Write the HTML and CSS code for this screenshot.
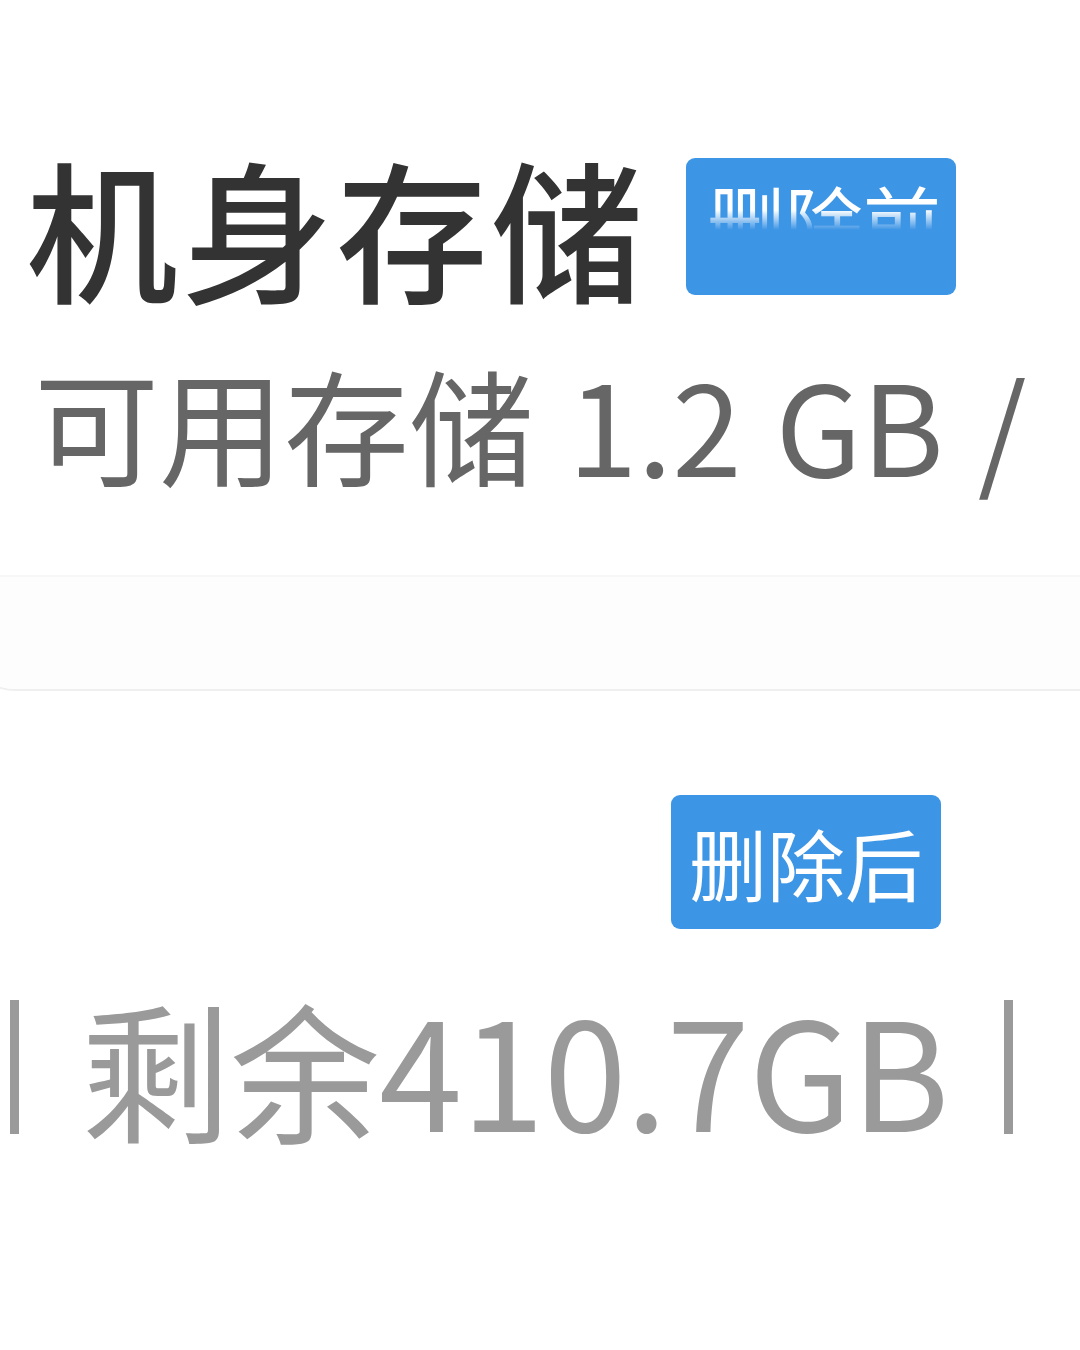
FILE: index.html
```html
<!DOCTYPE html>
<html lang="zh-CN">
<head>
<meta charset="utf-8">
<title>机身存储</title>
<link rel="stylesheet" href="styles.css">
</head>
<body>
  <section class="storage-card">
    <div class="card-body">
      <div class="title-row">
        <h1 class="title">机身存储</h1>
        <span class="tag tag-before"><span class="tag-text-clip">删除前</span></span>
      </div>
      <p class="usage">可用存储 1.2 GB /</p>
    </div>
    <div class="card-band"></div>
  </section>

  <section class="after">
    <div class="tag-row">
      <span class="tag tag-after">删除后</span>
    </div>
    <div class="remain">
      <span class="bar"></span>
      <span class="remain-text">剩余410.7GB</span>
      <span class="bar"></span>
    </div>
  </section>
</body>
</html>
```

FILE: styles.css
```css
html, body {
  margin: 0;
  padding: 0;
  background: #ffffff;
}

body {
  width: 1080px;
  height: 1350px;
  overflow: hidden;
  font-family: "Noto Sans CJK SC", "Noto Sans", sans-serif;
}

/* upper card: its left edge sits just off screen, only the rounded corner shows */
.storage-card {
  display: flex;
  flex-direction: column;
  margin-left: -40px;
  height: 689px;
  border-bottom-left-radius: 56px;
  border-bottom: 2px solid #efefef;
  background: #ffffff;
  overflow: hidden;
}

.card-body {
  padding: 158px 0 0 66px;
  height: 577px;
  box-sizing: border-box;
  border-bottom: 2px solid #f7f7f7;
  flex: none;
}

.card-band {
  flex: 1;
  background: #fdfdfd;
}

.title-row {
  display: flex;
  align-items: flex-start;
}

.title {
  margin: -7px 0 0 0;
  font-size: 152px;
  line-height: 150px;
  font-weight: 500;
  letter-spacing: 3px;
  color: #333333;
}

.tag {
  display: flex;
  justify-content: center;
  align-items: center;
  background: #3d95e6;
  color: #ffffff;
  border-radius: 9px;
  font-size: 78px;
  line-height: 1;
}

.tag-before {
  margin-left: 40px;
  width: 270px;
  height: 137px;
  align-items: flex-start;
}

/* the label's lower half is hidden behind a fade */
.tag-text-clip {
  display: block;
  margin-top: 22px;
  padding-left: 6px;
  height: 50px;
  overflow: hidden;
  -webkit-mask-image: linear-gradient(to bottom, #000 0, #000 60%, rgba(0,0,0,0) 100%);
  mask-image: linear-gradient(to bottom, #000 0, #000 60%, rgba(0,0,0,0) 100%);
}

.usage {
  margin: 59px 0 0 8px;
  font-size: 125px;
  line-height: 125px;
  color: #666666;
  white-space: nowrap;
  word-spacing: 6px;
}

.after {
  padding-top: 104px;
}

.tag-row {
  display: flex;
  padding-left: 671px;
}

.tag-after {
  width: 270px;
  height: 134px;
}

.remain {
  display: flex;
  align-items: center;
  margin-top: 63px;
  padding-left: 10px;
  color: #9a9a9a;
}

.bar {
  width: 9px;
  height: 134px;
  background: #9a9a9a;
}

.remain-text {
  margin: 0 55px 0 62px;
  font-size: 150px;
  line-height: 150px;
  white-space: nowrap;
  letter-spacing: -1px;
}
```
